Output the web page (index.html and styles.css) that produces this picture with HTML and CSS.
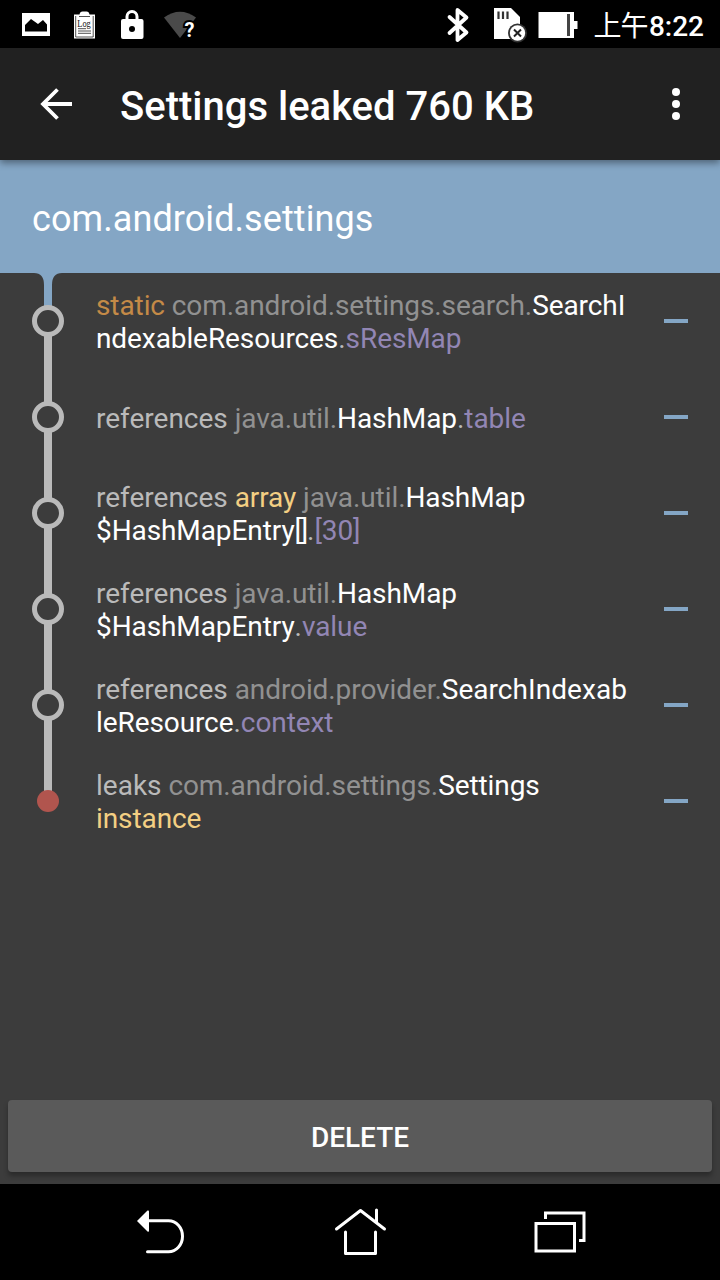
FILE: index.html
```html
<!DOCTYPE html>
<html lang="en">
<head>
<meta charset="utf-8">
<title>Settings leaked 760 KB</title>
<link rel="stylesheet" href="styles.css">
</head>
<body>
<div class="screen">
  <div class="status">
    <svg class="status-left" width="220" height="48" viewBox="0 0 220 48">
      <path fill="#fff" fill-rule="evenodd" d="M22 13h28v23H22zM25 31.500h22v-7l-4-4.500-5 4-7-5-6 6z"/>
      <path fill="#fff" d="M74 14.500h5.500q.5-3 3-3h4q2.500 0 3 3H95v24H74z"/>
      <path fill="none" stroke="#222" stroke-width=".8" d="M75.700 16v21h17.500V16M79 16.500h11M78 28.700h8M78 31h13M78 33.300h13"/>
      <text class="log" x="77.300" y="27" textLength="13.500" lengthAdjust="spacingAndGlyphs">Log</text>
      <path fill="none" stroke="#fff" stroke-width="3" d="M127 20v-3.500a5 5 0 0 1 10 0V20"/>
      <rect x="121" y="19" width="22.500" height="20" rx="2" fill="#fff"/>
      <circle cx="132" cy="29" r="3" fill="#000"/>
      <path fill="#4a4a4a" d="M164 17.500Q180 6 196 17.500L180 38z"/>
      <text class="question" x="184.500" y="37">?</text>
    </svg>
    <svg class="status-right" width="140" height="48" viewBox="440 0 140 48">
      <path fill="none" stroke="#fff" stroke-width="3.800" stroke-linejoin="round" stroke-linecap="round" d="M449.500 17l17 15.500-9 7.500v-30l9 7.500L449.500 33"/>
      <path fill="#fff" d="M494 8h17l9 9v22h-26z"/>
      <path stroke="#333" stroke-width="2.200" d="M498.500 11.500v7.500M503 11.500v7.500M507.500 11.500v7.500"/>
      <circle cx="517.500" cy="33" r="9.500" fill="#333"/>
      <circle cx="517.500" cy="33" r="7.700" fill="#fff"/>
      <path stroke="#222" stroke-width="2" d="M514 29.500l7 7M521 29.500l-7 7"/>
      <path fill="#fff" d="M538.500 12H574v9h3.500v8H574v9h-35.500z"/>
      <path fill="#444" d="M567 14h3v22h-3z"/>
    </svg>
    <div class="clock"><svg width="110" height="48" viewBox="594 0 110 48"><text class="clock-cjk" x="593.500" y="35.500" textLength="55">上午</text><text class="clock-time" x="649" y="36" textLength="55">8:22</text></svg></div>
  </div>
  <div class="toolbar">
    <svg class="back" width="32" height="32" viewBox="0 0 32 32"><path fill="none" stroke="#fff" stroke-width="3.800" d="M32 16H3.500M17.500 1.500L3 16l14.500 14.500"/></svg>
    <h1 class="title">Settings leaked 760 KB</h1>
    <svg class="more" width="8" height="32" viewBox="0 0 8 32" fill="#fff"><circle cx="4" cy="4" r="4"/><circle cx="4" cy="16" r="4"/><circle cx="4" cy="28" r="4"/></svg>
  </div>
  <div class="banner">com.android.settings</div>
  <div class="list">
    <div class="row">
      <svg class="node" width="96" height="96" viewBox="0 0 96 96"><path fill="#84a6c5" d="M34 0Q44 0 44 12V34h8V12Q52 0 62 0z"/><path class="line" d="M44 48h8v48h-8z"/><circle class="ring" cx="48" cy="48" r="13.500"/></svg>
      <div class="text"><span class="static">static</span> <span class="pkg">com.android.settings.search.</span>SearchI<br>ndexableResources<span class="verb">.</span><span class="field">sResMap</span></div>
      <div class="dash"></div>
    </div>
    <div class="row">
      <svg class="node" width="96" height="96" viewBox="0 0 96 96"><path class="line" d="M44 0h8v96h-8z"/><circle class="ring" cx="48" cy="48" r="13.500"/></svg>
      <div class="text"><span class="verb">references</span> <span class="pkg">java.util.</span>HashMap<span class="verb">.</span><span class="field">table</span></div>
      <div class="dash"></div>
    </div>
    <div class="row">
      <svg class="node" width="96" height="96" viewBox="0 0 96 96"><path class="line" d="M44 0h8v96h-8z"/><circle class="ring" cx="48" cy="48" r="13.500"/></svg>
      <div class="text"><span class="verb">references</span> <span class="extra">array</span> <span class="pkg">java.util.</span>HashMap<br>$HashMapEntry<span class="brackets">[]</span><span class="verb">.</span><span class="field">[30]</span></div>
      <div class="dash"></div>
    </div>
    <div class="row">
      <svg class="node" width="96" height="96" viewBox="0 0 96 96"><path class="line" d="M44 0h8v96h-8z"/><circle class="ring" cx="48" cy="48" r="13.500"/></svg>
      <div class="text"><span class="verb">references</span> <span class="pkg">java.util.</span>HashMap<br>$HashMapEntry<span class="verb">.</span><span class="field">value</span></div>
      <div class="dash"></div>
    </div>
    <div class="row">
      <svg class="node" width="96" height="96" viewBox="0 0 96 96"><path class="line" d="M44 0h8v96h-8z"/><circle class="ring" cx="48" cy="48" r="13.500"/></svg>
      <div class="text"><span class="verb">references</span> <span class="pkg">android.provider.</span><span class="wide">SearchIndexab</span><br>leResource<span class="verb">.</span><span class="field">context</span></div>
      <div class="dash"></div>
    </div>
    <div class="row">
      <svg class="node" width="96" height="96" viewBox="0 0 96 96"><path class="line" d="M44 0h8v40h-8z"/><circle cx="48" cy="48" r="11" fill="#b1554e"/></svg>
      <div class="text"><span class="verb">leaks</span> <span class="pkg">com.android.settings.</span>Settings<br><span class="extra">instance</span></div>
      <div class="dash"></div>
    </div>
  </div>
  <div class="footer"><button class="delete">DELETE</button></div>
  <div class="nav">
    <svg width="720" height="96" viewBox="0 1184 720 96" fill="none" stroke="#fff" stroke-width="3" stroke-linecap="round" stroke-linejoin="round">
      <path d="M148 1220.700h20.500a14 15.500 0 0 1 0 31H147.500"/>
      <path fill="#fff" stroke="none" d="M137 1221l10.500-10.500q1.500-.5 1.500 1v19q0 2-1.500 1z"/>
      <path d="M336.500 1229l24-18.500 24 18.500M376.500 1210v12M345.500 1232v21.500h30V1232"/>
      <path stroke-linejoin="miter" stroke-linecap="butt" d="M536 1223.500h38.500v27.500H536zM545.500 1219v-6h38.500v27.500h-5"/>
    </svg>
  </div>
</div>
</body>
</html>
```
FILE: styles.css
```css
* { box-sizing: border-box; }
body { margin: 0; background: #000; font-family: Roboto, "Noto Sans CJK SC", sans-serif; color: #fff; }
.screen { width: 720px; height: 1280px; display: flex; flex-direction: column; background: #3c3c3c; overflow: hidden; }
.status { height: 48px; flex: none; background: #000; display: flex; padding-right: 16px; }
.status svg { display: block; }
.status-right { margin-left: auto; margin-right: 14px; }
.log { font: 400 10px "Liberation Serif", serif; fill: #111; }
.question { font: 700 20px Roboto, sans-serif; fill: #fff; stroke: #000; stroke-width: 4px; paint-order: stroke; }
.clock-cjk { font: 400 28px "Noto Sans CJK SC", sans-serif; fill: #fff; }
.clock-time { font: 500 28px Roboto, sans-serif; fill: #fff; }
.toolbar { height: 112px; flex: none; background: #212121; display: flex; align-items: center; padding: 0 40px; position: relative; box-shadow: 0 3px 7px rgba(0, 0, 0, .4); }
.title { margin: 6px auto 0 48px; font-size: 40px; line-height: 48px; font-weight: 500; white-space: nowrap; }
.banner { height: 113px; flex: none; background: #84a6c5; padding: 5px 32px 0; display: flex; align-items: center; font-size: 36px; letter-spacing: .08px; }
.list { flex: 1; }
.row { height: 96px; display: flex; align-items: center; padding-right: 32px; }
.node { flex: none; }
.line { fill: #bababa; }
.ring { fill: #3c3c3c; stroke: #bababa; stroke-width: 5px; }
.text { flex: 1; padding-top: 2px; font-size: 28px; line-height: 33px; letter-spacing: -.09px; white-space: nowrap; }
.dash { width: 24px; height: 4px; flex: none; background: #84a6c5; }
.static { color: #c48a47; }
.pkg { color: #919191; }
.verb { color: #bababa; letter-spacing: 0; }
.field { color: #9286b4; }
.extra { color: #f3cf83; }
.brackets { letter-spacing: -1.2px; }
.wide { letter-spacing: .05px; }
.footer { flex: none; padding: 0 8px 12px; }
.delete { display: block; width: 100%; height: 72px; border: 0; border-radius: 4px; background: #5a5a5a; color: #fff; font: 500 28px Roboto, sans-serif; padding: 2px 0 0; box-shadow: 0 4px 5px rgba(0, 0, 0, .3); }
.nav { height: 96px; flex: none; background: #000; }
.nav svg { display: block; }
```
